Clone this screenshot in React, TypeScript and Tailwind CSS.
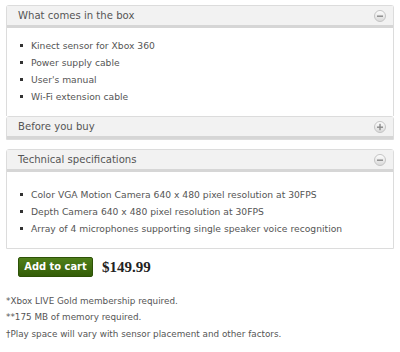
import React from 'react';

const font = { fontFamily: '"DejaVu Sans", Verdana, sans-serif' };

const ToggleIcon: React.FC<{ open: boolean }> = ({ open }) => (
  <svg width="12" height="12" viewBox="0 0 12 12" className="shrink-0">
    <defs>
      <linearGradient id={open ? 'gm' : 'gp'} x1="0" y1="0" x2="0" y2="1">
        <stop offset="0" stopColor="#ffffff" />
        <stop offset="1" stopColor="#d8d8d8" />
      </linearGradient>
    </defs>
    <circle cx="6" cy="6" r="5.5" fill={`url(#${open ? 'gm' : 'gp'})`} stroke="#c4c4c4" />
    <rect x="3" y="5.5" width="6" height="1.4" fill="#8a8a8a" />
    {!open && <rect x="5.3" y="2.8" width="1.4" height="6.4" fill="#8a8a8a" />}
  </svg>
);

const Panel: React.FC<{
  title: string;
  open: boolean;
  items?: string[];
  className?: string;
  bodyClass?: string;
}> = ({ title, open, items, className = '', bodyClass = 'pt-[10px] pb-[10px]' }) => (
  <section className={`border border-[#dcdcdc] rounded-t-[3px] ${className}`}>
    <header className="h-[22px] bg-[#f2f2f2] border-b-[3px] border-[#d6d6d6] flex items-center justify-between pl-[11px] pr-[7px]">
      <h3 className="text-[10.1px] text-[#555]">{title}</h3>
      <ToggleIcon open={open} />
    </header>
    {open && items && (
      <ul className={`pl-[13px] ${bodyClass}`}>
        {items.map((item) => (
          <li key={item} className="h-[17px] flex items-center gap-[8px] text-[9.2px] text-[#555]">
            <span className="w-[3px] h-[3px] bg-[#333]" />
            {item}
          </li>
        ))}
      </ul>
    )}
  </section>
);

const App: React.FC = () => {
  return (
    <div className="w-[400px] h-[352px] bg-white overflow-hidden pt-[5px]" style={font}>
      <div className="ml-[6px] w-[388px]">
        <Panel
          title="What comes in the box"
          open
          items={['Kinect sensor for Xbox 360', 'Power supply cable', "User's manual", 'Wi-Fi extension cable']}
          className="border-b-0"
          bodyClass="pt-[9px] pb-[11px]"
        />
        <Panel title="Before you buy" open={false} className="rounded-none" />
        <Panel
          title="Technical specifications"
          open
          className="mt-[9px]"
          bodyClass="pt-[14px] pb-[11px]"
          items={[
            'Color VGA Motion Camera 640 x 480 pixel resolution at 30FPS',
            'Depth Camera 640 x 480 pixel resolution at 30FPS',
            'Array of 4 microphones supporting single speaker voice recognition',
          ]}
        />
      </div>

      <div className="mt-[7px] ml-[18px] flex items-center gap-[9px]">
        <button
          className="w-[75px] h-[20px] rounded-[2px] bg-gradient-to-b from-[#4f7f1a] to-[#335d08] border border-[#2d5207] text-white text-[11px] font-bold flex items-center justify-center"
          style={{ fontFamily: '"DejaVu Sans Condensed", "DejaVu Sans", sans-serif' }}
        >
          Add to cart
        </button>
        <span className="text-[15px] font-bold text-[#222]" style={{ fontFamily: '"Liberation Serif", Georgia, serif' }}>
          $149.99
        </span>
      </div>

      <div className="mt-[14px] ml-[6px] text-[8.8px] text-[#555] leading-[16.5px]">
        <p>*Xbox LIVE Gold membership required.</p>
        <p>**175 MB of memory required.</p>
        <p>†Play space will vary with sensor placement and other factors.</p>
      </div>
    </div>
  );
};

export default App;
